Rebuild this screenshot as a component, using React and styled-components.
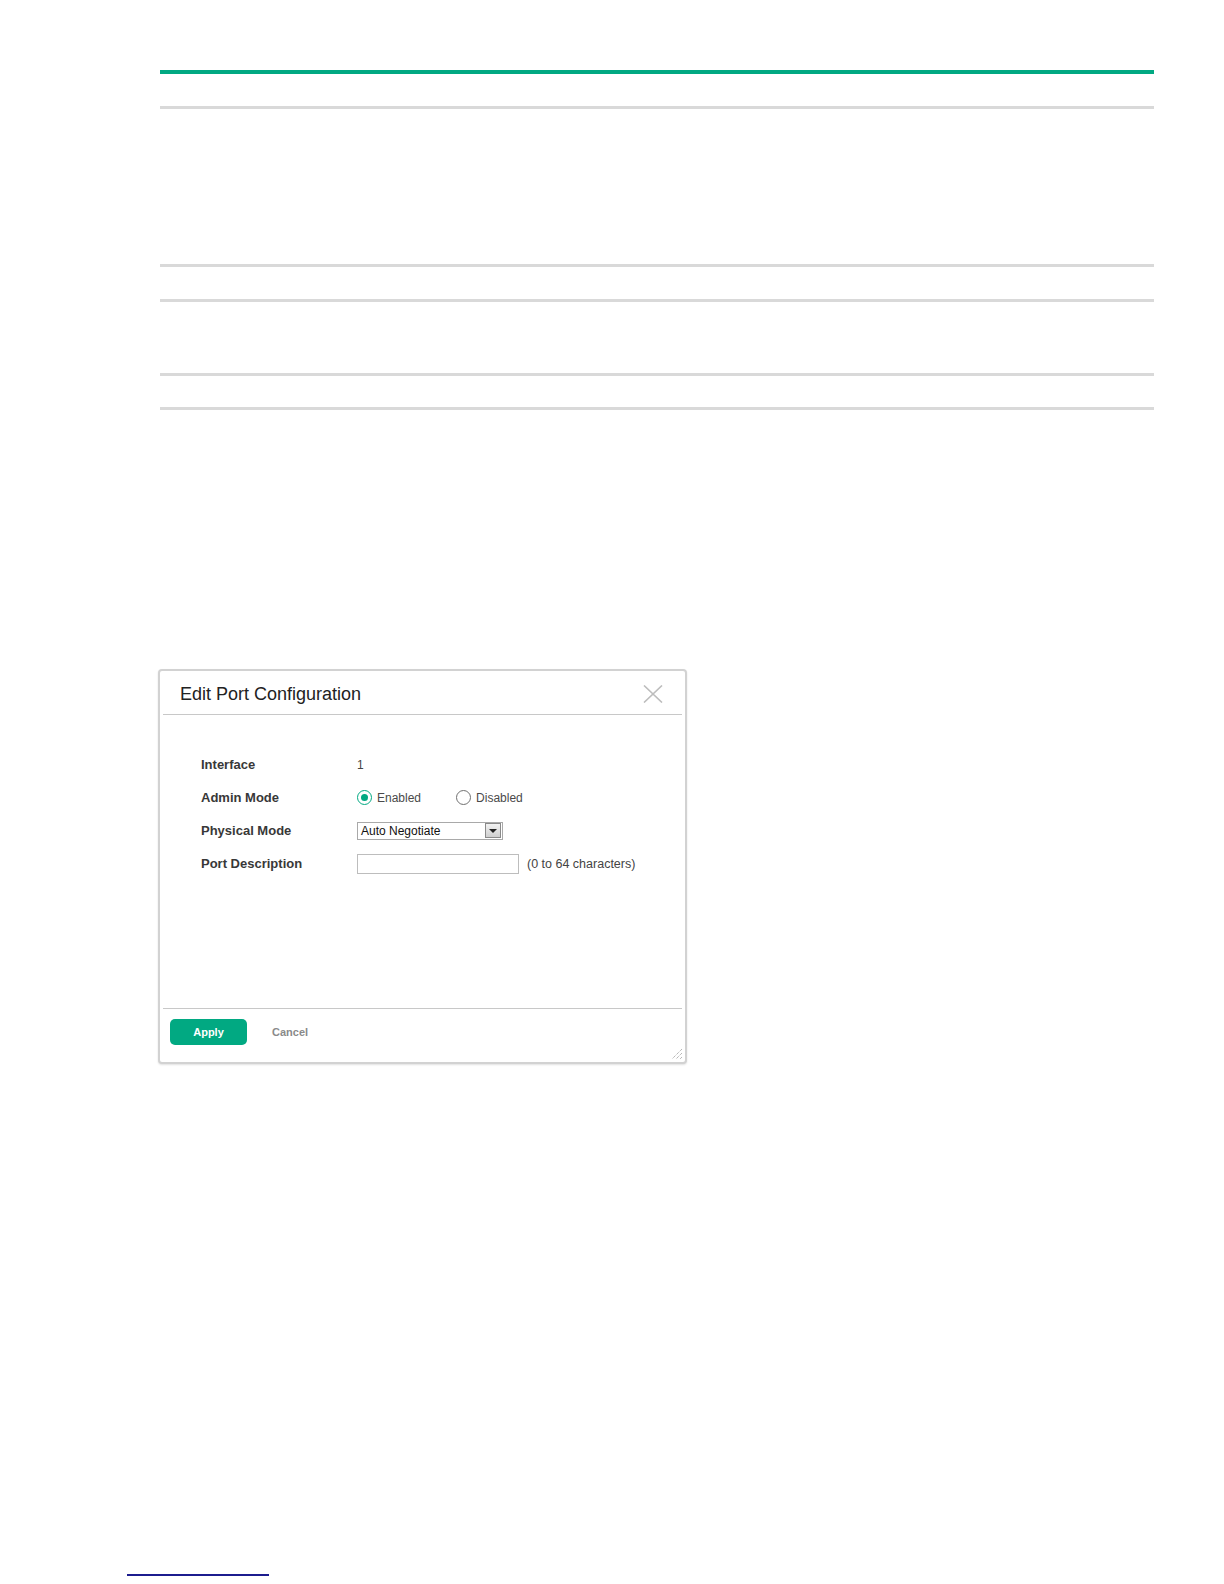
import styled, { createGlobalStyle } from "styled-components";

const GlobalStyle = createGlobalStyle`
  html, body {
    margin: 0;
    padding: 0;
    background: #ffffff;
    font-family: "Liberation Sans", Arial, sans-serif;
  }
  * {
    box-sizing: border-box;
  }
`;

const Page = styled.div`
  width: 1224px;
  min-height: 1584px;
  display: flex;
  flex-direction: column;
  padding-top: 70px;
`;

const Table = styled.div`
  margin-left: 160px;
  width: 994px;
  border-top: 4px solid #01a982;
  display: flex;
  flex-direction: column;
`;

// height includes the 3px rule at the bottom
const TableRow = styled.div`
  height: ${(p) => p.$height}px;
  border-bottom: 3px solid #d9d9d9;
`;

const Dialog = styled.div`
  position: relative;
  margin: 259px 0 0 158px;
  width: 529px;
  height: 395px;
  border: 2px solid #d2d2d2;
  border-radius: 4px;
  box-shadow: 0 1px 2px rgba(0, 0, 0, 0.12);
  background: #ffffff;
  padding: 0 3px;
  display: flex;
  flex-direction: column;
`;

const DialogHeader = styled.div`
  height: 44px;
  display: flex;
  align-items: center;
  justify-content: space-between;
  padding: 3px 19px 0 17px;
  border-bottom: 1px solid #c8c8c8;
`;

const DialogTitle = styled.h2`
  margin: 0;
  font-size: 18px;
  font-weight: normal;
  color: #222222;
`;

const CloseButton = styled.button`
  border: none;
  background: none;
  padding: 0;
  width: 20px;
  height: 20px;
  display: flex;
  align-items: center;
  justify-content: center;
  cursor: pointer;
`;

const DialogBody = styled.div`
  flex: 1;
  padding: 33px 0 0 38px;
`;

const FormGrid = styled.div`
  display: grid;
  grid-template-columns: 156px 1fr;
  grid-auto-rows: 33px;
  align-items: center;
`;

const Label = styled.div`
  font-size: 13px;
  font-weight: bold;
  color: #383838;
`;

const Value = styled.div`
  font-size: 12px;
  color: #444444;
  display: flex;
  align-items: center;
`;

const RadioOption = styled.label`
  display: flex;
  align-items: center;
  gap: 5px;
  margin-right: 35px;
  font-size: 12px;
  color: #4a4a4a;
`;

const RadioCircle = styled.span`
  width: 15px;
  height: 15px;
  border-radius: 50%;
  border: 1.5px solid ${(p) => (p.$checked ? "#01a982" : "#707070")};
  display: flex;
  align-items: center;
  justify-content: center;
  &::after {
    content: "";
    width: 7px;
    height: 7px;
    border-radius: 50%;
    background: ${(p) => (p.$checked ? "#01a982" : "transparent")};
  }
`;

const Select = styled.div`
  width: 146px;
  height: 18px;
  border: 1px solid #a9a9a9;
  display: flex;
  align-items: center;
  justify-content: space-between;
  padding: 0 1px 0 3px;
  font-size: 12px;
  color: #111111;
`;

const SelectArrow = styled.span`
  width: 16px;
  height: 15px;
  border: 1px solid #8a8a8a;
  background: linear-gradient(#f2f2f2, #cfcfcf);
  display: flex;
  align-items: center;
  justify-content: center;
  &::after {
    content: "";
    border-left: 4px solid transparent;
    border-right: 4px solid transparent;
    border-top: 4px solid #222222;
  }
`;

const TextInput = styled.input`
  width: 162px;
  height: 20px;
  border: 1px solid #bdbdbd;
  margin: 0 8px 0 0;
  padding: 0 3px;
  font-size: 12px;
`;

const Hint = styled.span`
  font-size: 12.5px;
  color: #444444;
`;

const DialogFooter = styled.div`
  height: 54px;
  border-top: 1px solid #c8c8c8;
  display: flex;
  align-items: flex-start;
  gap: 25px;
  padding: 10px 0 0 7px;
`;

const PrimaryButton = styled.button`
  width: 77px;
  height: 26px;
  border: none;
  border-radius: 5px;
  background: #01a982;
  color: #ffffff;
  font-family: inherit;
  font-size: 11px;
  font-weight: bold;
`;

const TextButton = styled.button`
  border: none;
  background: none;
  padding: 0;
  height: 26px;
  color: #8a8a8a;
  font-family: inherit;
  font-size: 11px;
  font-weight: bold;
`;

const ResizeGrip = styled.svg`
  position: absolute;
  right: 2px;
  bottom: 2px;
`;

const FooterLink = styled.a`
  display: block;
  margin: 510px 0 0 127px;
  width: 142px;
  height: 2px;
  background: #1c1c8e;
`;

const Radio = ({ checked, children }) => (
  <RadioOption>
    <RadioCircle $checked={checked} />
    {children}
  </RadioOption>
);

export default function App() {
  return (
    <>
      <GlobalStyle />
      <Page>
        <Table>
          <TableRow $height={35} />
          <TableRow $height={158} />
          <TableRow $height={35} />
          <TableRow $height={74} />
          <TableRow $height={34} />
        </Table>

        <Dialog>
          <DialogHeader>
            <DialogTitle>Edit Port Configuration</DialogTitle>
            <CloseButton aria-label="Close">
              <svg width="20" height="18" viewBox="0 0 20 18">
                <path
                  d="M1 0.5 L19 17.5 M19 0.5 L1 17.5"
                  stroke="#bdbdbd"
                  strokeWidth="1.6"
                  fill="none"
                />
              </svg>
            </CloseButton>
          </DialogHeader>

          <DialogBody>
            <FormGrid>
              <Label>Interface</Label>
              <Value>1</Value>

              <Label>Admin Mode</Label>
              <Value>
                <Radio checked>Enabled</Radio>
                <Radio>Disabled</Radio>
              </Value>

              <Label>Physical Mode</Label>
              <Value>
                <Select>
                  Auto Negotiate
                  <SelectArrow />
                </Select>
              </Value>

              <Label>Port Description</Label>
              <Value>
                <TextInput />
                <Hint>(0 to 64 characters)</Hint>
              </Value>
            </FormGrid>
          </DialogBody>

          <DialogFooter>
            <PrimaryButton>Apply</PrimaryButton>
            <TextButton>Cancel</TextButton>
          </DialogFooter>

          <ResizeGrip width="12" height="12" viewBox="0 0 12 12">
            <path
              d="M11 1 L1 11 M11 5 L5 11 M11 9 L9 11"
              stroke="#9a9a9a"
              strokeWidth="1"
              strokeDasharray="1 1"
              fill="none"
            />
          </ResizeGrip>
        </Dialog>

        <FooterLink href="#" aria-label="link" />
      </Page>
    </>
  );
}
